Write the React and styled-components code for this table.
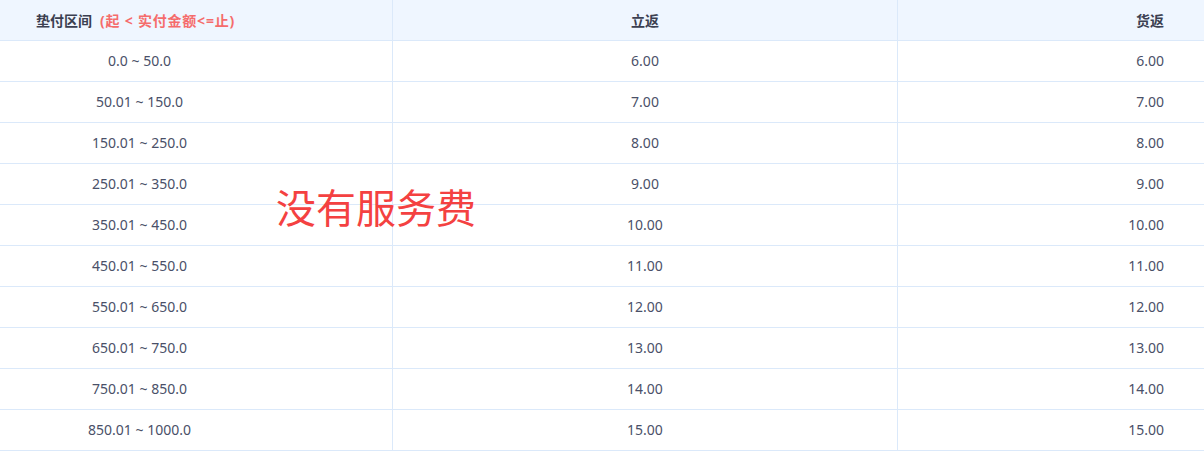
import React from "react";
import styled, { createGlobalStyle } from "styled-components";

const Global = createGlobalStyle`
  html, body { margin: 0; padding: 0; background: #fff; }
  body { font-family: "Noto Sans", "Noto Sans CJK SC", sans-serif; }
`;

const Wrap = styled.div`
  position: relative;
  width: 1204px;
`;

const Grid = styled.div`
  display: grid;
  grid-template-columns: 393px 505px 1fr;
`;

const Cell = styled.div`
  box-sizing: border-box;
  height: 41px;
  display: flex;
  align-items: center;
  border-bottom: 1px solid #dbe9fa;
  border-right: ${(p) => (p.$last ? "none" : "1px solid #dbe9fa")};
  background: ${(p) => (p.$head ? "#eff6ff" : "#fff")};
  color: ${(p) => (p.$head ? "#3b3f51" : "#4a5068")};
  font-size: 14px;
  font-weight: ${(p) => (p.$head ? 700 : 400)};
  justify-content: ${(p) =>
    p.$align === "right" ? "flex-end" : "center"};
  padding-right: ${(p) =>
    p.$align === "right"
      ? "40px"
      : p.$align === "left"
      ? p.$head
        ? "121px"
        : "113px"
      : "0"};
  padding-bottom: 1px;
  white-space: pre;
`;

const Hint = styled.span`
  color: #f56c6c;
  margin-left: 8px;
  letter-spacing: 0.8px;
`;

const Stamp = styled.div`
  position: absolute;
  left: 276px;
  top: 186px;
  font-size: 40px;
  line-height: 40px;
  color: #f44141;
  font-family: "Noto Sans CJK SC", sans-serif;
  pointer-events: none;
`;

const rows = [
  ["0.0 ~ 50.0", "6.00"],
  ["50.01 ~ 150.0", "7.00"],
  ["150.01 ~ 250.0", "8.00"],
  ["250.01 ~ 350.0", "9.00"],
  ["350.01 ~ 450.0", "10.00"],
  ["450.01 ~ 550.0", "11.00"],
  ["550.01 ~ 650.0", "12.00"],
  ["650.01 ~ 750.0", "13.00"],
  ["750.01 ~ 850.0", "14.00"],
  ["850.01 ~ 1000.0", "15.00"],
];

export default function App() {
  return (
    <Wrap>
      <Global />
      <Grid>
        <Cell $head $align="left">
          垫付区间<Hint>(起 &lt; 实付金额&lt;=止)</Hint>
        </Cell>
        <Cell $head>立返</Cell>
        <Cell $head $last $align="right">货返</Cell>
        {rows.map(([range, v]) => (
          <React.Fragment key={range}>
            <Cell $align="left">{range}</Cell>
            <Cell>{v}</Cell>
            <Cell $last $align="right">{v}</Cell>
          </React.Fragment>
        ))}
      </Grid>
      <Stamp>没有服务费</Stamp>
    </Wrap>
  );
}
